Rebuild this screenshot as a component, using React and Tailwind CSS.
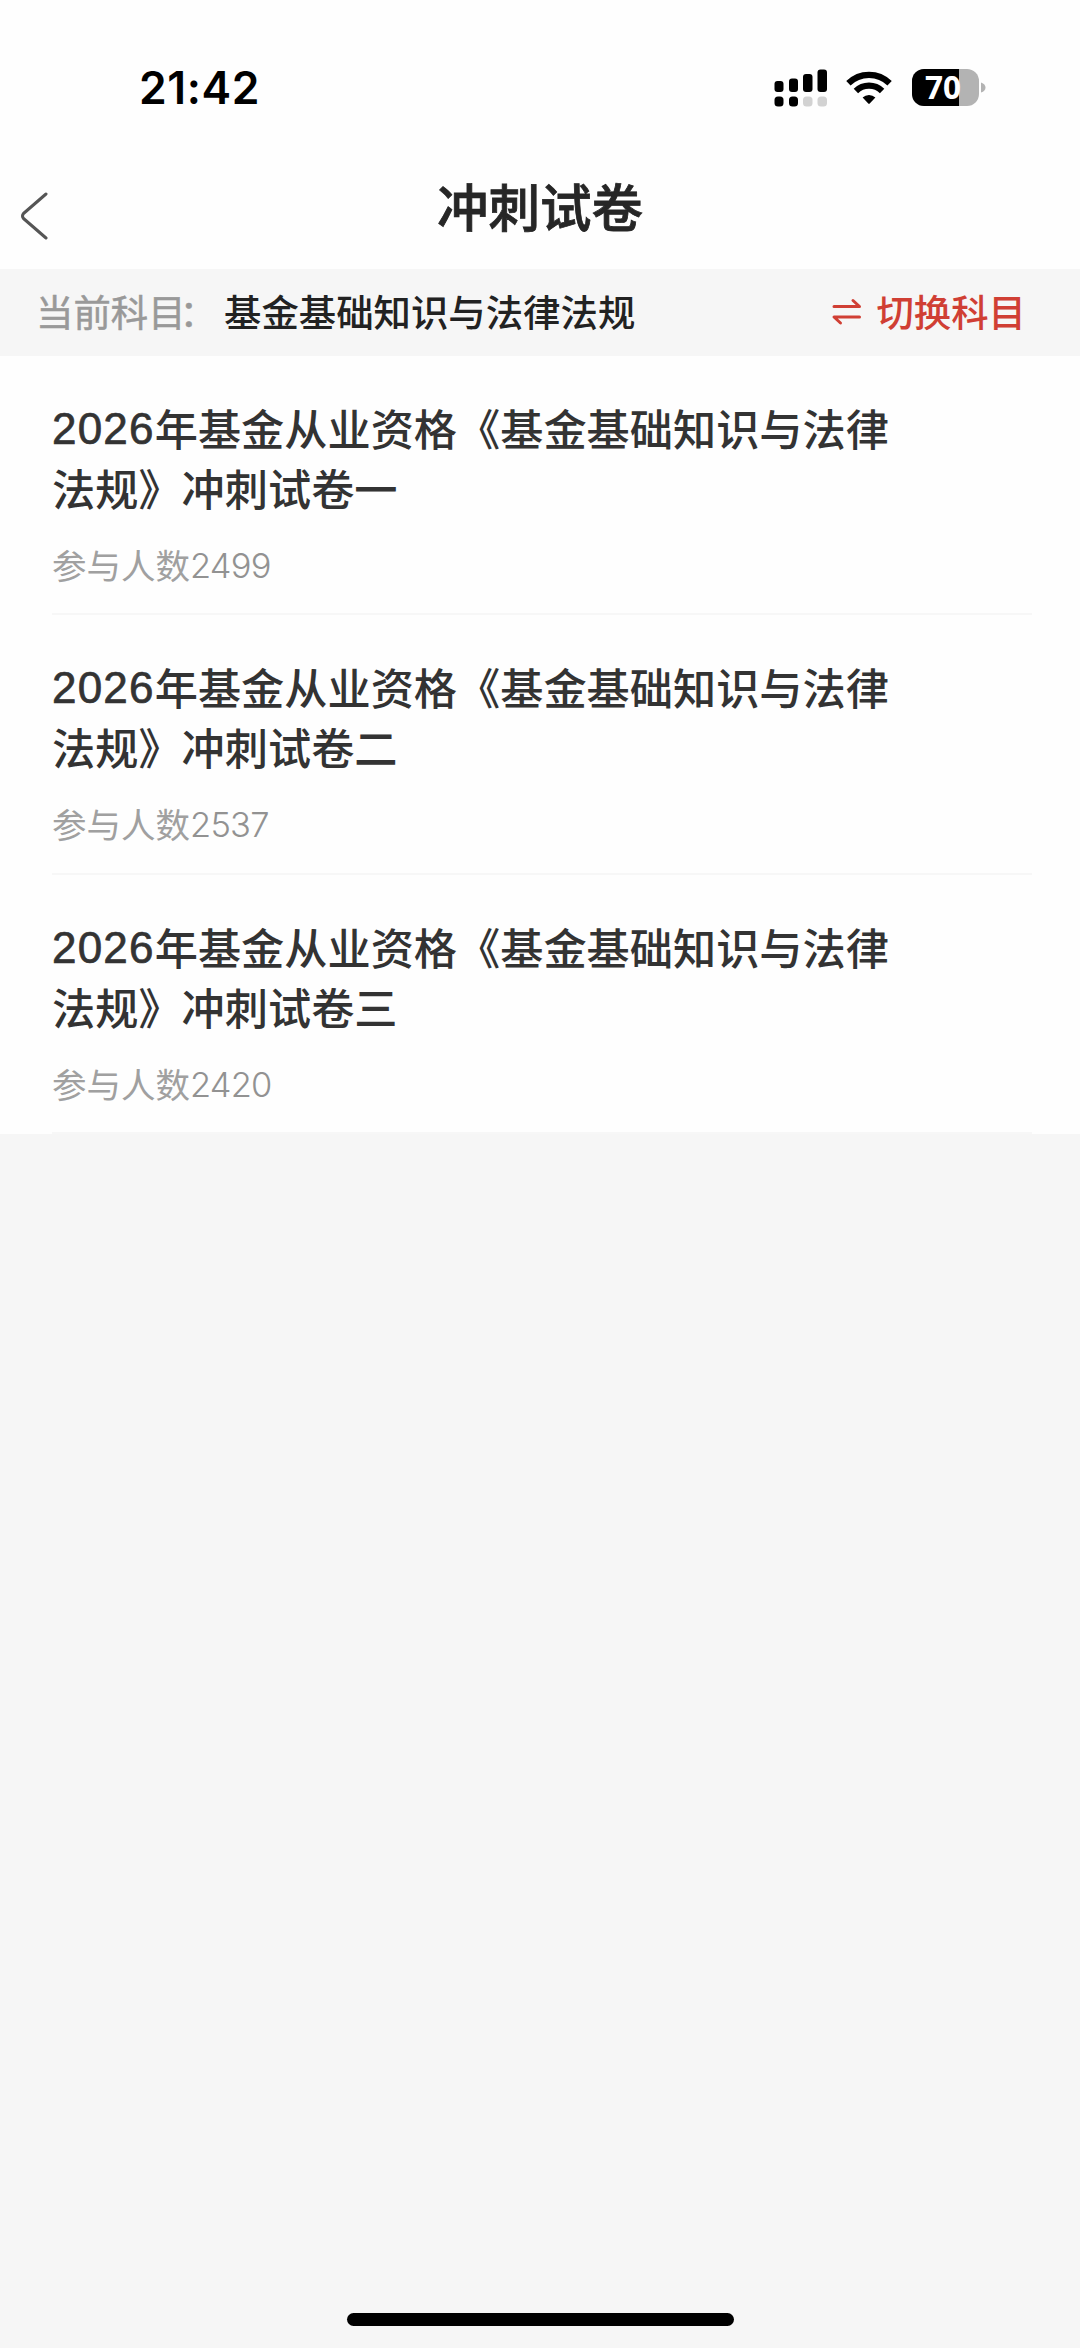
import React from 'react';

const papers = [
    { id: 1, year: '2026', title: '年基金从业资格《基金基础知识与法律法规》冲刺试卷一', count: 2499 },
    { id: 2, year: '2026', title: '年基金从业资格《基金基础知识与法律法规》冲刺试卷二', count: 2537 },
    { id: 3, year: '2026', title: '年基金从业资格《基金基础知识与法律法规》冲刺试卷三', count: 2420 },
];

const SignalIcon = () => (
    <svg className="w-[54px] h-[38px]" viewBox="0 0 54 38">
        <rect x="0.5" y="12" width="9" height="11" rx="3" />
        <rect x="15" y="9.5" width="9" height="13.5" rx="3" />
        <rect x="29" y="5" width="9.5" height="18" rx="3" />
        <rect x="43.5" y="0.5" width="9.5" height="22.5" rx="3" />
        <rect x="0.5" y="27.5" width="9" height="10" rx="3.5" />
        <rect x="15" y="27.5" width="9" height="10" rx="3.5" />
        <rect x="29" y="27.5" width="9.5" height="10" rx="3.5" fill="#d2d2d2" />
        <rect x="43.5" y="27.5" width="9.5" height="10" rx="3.5" fill="#d2d2d2" />
    </svg>
);

const WifiIcon = () => (
    <svg className="w-[46px] h-[34px]" viewBox="0 0 46 34" fill="none" stroke="#000" strokeWidth="6.2">
        <path d="M2.4 12.2 A29.4 29.4 0 0 1 43.6 12.2" />
        <path d="M9.9 20 A18.6 18.6 0 0 1 36.1 20" />
        <path d="M16.6 26.5 A9.3 9.3 0 0 1 29.4 26.5 L23.7 32.6 Q23 33.4 22.3 32.6 Z" fill="#000" stroke="none" />
    </svg>
);

const Battery = () => (
    <div className="flex items-center">
        <div className="relative w-[67px] h-[37px] rounded-[12px] bg-[#b3b3b3]">
            <div className="w-[47px] h-full rounded-l-[12px] bg-black"></div>
            <span className="absolute inset-0 pl-[13px] font-[Open_Sans] font-bold text-[31.5px] leading-[36px] text-white">70</span>
        </div>
        <svg className="w-[5px] h-[11px] ml-[2px]" viewBox="0 0 5 11">
            <path d="M0 0.5 Q4.5 2 4.5 5.5 T0 10.5 Z" fill="#b3b3b3" />
        </svg>
    </div>
);

const StatusBar = () => (
    <div className="flex h-[160px] pt-[68px] pl-[139px] pr-[94px] justify-between items-start">
        <span className="font-[Inter] font-semibold text-[44.5px] leading-[40px] tracking-[0.6px] text-black">21:42</span>
        <div className="flex items-center h-[39px]">
            <SignalIcon />
            <div className="ml-[18px] mr-[20px]"><WifiIcon /></div>
            <Battery />
        </div>
    </div>
);

const PaperItem = ({ paper }) => (
    <li className="h-[259.3px] pt-[41px] ml-[52px] mr-[48px] border-b-2 border-[#f7f7f7]">
        <h2 className="w-[860px] text-[43.2px] leading-[60px] font-medium text-[#333]">
            <span className="font-['Liberation_Sans'] text-[44px] font-normal leading-none tracking-[1.2px] align-[2px] [-webkit-text-stroke:0.7px_#333]">{paper.year}</span>
            {paper.title}
        </h2>
        <p className="mt-[23px] text-[34.5px] leading-[48px] font-normal text-[#a0a0a0]">
            参与人数<span className="font-[Inter] font-light leading-none tracking-[-0.8px] align-[1px] text-[#929292]">{paper.count}</span>
        </p>
    </li>
);

const App = () => {
    return (
        <div className="flex flex-col w-[1080px] h-[2348px] bg-[#f6f6f6] font-['Noto_Sans_CJK_SC',sans-serif]">
            <header className="h-[269px] shrink-0 bg-[#fefefe]">
                <StatusBar />
                <div className="grid grid-cols-[1fr_auto_1fr] h-[96px] items-center">
                    <button className="pl-[20px] pt-[16px]">
                        <svg className="w-[30px] h-[48px]" viewBox="0 0 30 48" fill="none" stroke="#555" strokeWidth="3" strokeLinecap="round" strokeLinejoin="round">
                            <path d="M26 2 L3.5 21.5 Q1.5 24 3.5 26.5 L26 46" />
                        </svg>
                    </button>
                    <h1 className="pb-[6px] text-[51.5px] leading-[72px] font-medium text-[#262626] [-webkit-text-stroke:0.8px_#262626]">冲刺试卷</h1>
                </div>
            </header>
            <div className="flex items-center h-[87px] shrink-0 pl-[36px] pr-[54px] pb-[3px] text-[37.4px] leading-[54px]">
                <span className="text-[#999] [-webkit-text-stroke:0.5px_#999]">当前科目<span className="-ml-[6px] mr-[7px]">：</span></span>
                <span className="font-medium text-[#222]">基金基础知识与法律法规</span>
                <button className="flex items-center ml-auto font-medium text-[#d03f34]">
                    <svg className="w-[30px] h-[28px] mt-[2px] mr-[14px]" viewBox="0 0 30 28" fill="none" stroke="currentColor" strokeWidth="3" strokeLinecap="round" strokeLinejoin="round">
                        <path d="M2 8.5 H27.5 L21 2.5" />
                        <path d="M27.5 19 H2 L8.5 25" />
                    </svg>
                    切换科目
                </button>
            </div>
            <ul className="bg-[#fefefe]">
                {papers.map((paper) => (
                    <PaperItem key={paper.id} paper={paper} />
                ))}
            </ul>
            <div className="mt-auto mb-[22px] mx-auto w-[387px] h-[13px] rounded-full bg-black"></div>
        </div>
    );
};

export default App;
